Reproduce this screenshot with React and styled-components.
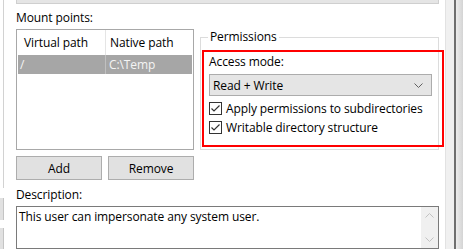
import React from "react";
import styled, { createGlobalStyle } from "styled-components";

const GlobalStyle = createGlobalStyle`
  html, body {
    margin: 0;
    padding: 0;
    background: #ffffff;
  }
  body {
    font-family: "Open Sans", "Noto Sans", "Liberation Sans", sans-serif;
    font-size: 12px;
    letter-spacing: -0.1px;
    color: #000000;
    overflow: hidden;
  }
`

const Window = styled.div`
  display: flex;
  width: 463px;
  height: 249px;
  overflow: hidden;
  background: #ffffff;
`
const LeftEdge = styled.div`
  width: 4px;
  display: flex;
  flex-direction: column;
`
const EdgeLine = styled.div`
  height: 193px;
  border-right: 1px solid #d2d2d2;
`
const EdgeButton = styled.div`
  height: ${p => p.h}px;
  margin-top: ${p => p.gap}px;
  background: #e1e1e1;
  border-right: 1px solid #c4c4c4;
`
const Main = styled.div`
  flex: 1;
  min-width: 0;
  padding: 0 6px 0 12px;
  display: flex;
  flex-direction: column;
`
const RightEdge = styled.div`
  width: 18px;
  display: flex;
`
const Strip = styled.div`
  width: 8px;
  background: #f0f0f0;
  border-left: 1px solid #e2e2e2;
`
const DarkLine = styled.div`
  width: 2px;
  background: #6f6f6f;
`
const Shade = styled.div`
  flex: 1;
  background: linear-gradient(to right, #ececec, #d4d4d4);
`
const TopBox = styled.div`
  height: 5px;
  background: #e5e5e5;
  border: 1px solid #cfcfcf;
  border-top: none;
`
const Columns = styled.div`
  display: grid;
  grid-template-columns: 178px 239px;
  column-gap: 6px;
  align-items: start;
`
const LeftCol = styled.div`
  display: flex;
  flex-direction: column;
`
const Label = styled.div`
  line-height: 16px;
  margin-top: ${p => p.top || 0}px;
  padding-top: ${p => p.drop || 0}px;
  white-space: nowrap;
`
const List = styled.div`
  margin-top: 3px;
  height: 119px;
  border: 1px solid #a8a8a8;
  padding: 0 1px;
  display: flex;
  flex-direction: column;
`
const ListRow = styled.div`
  display: grid;
  grid-template-columns: 87px 1fr;
  height: ${p => p.h}px;
  align-items: center;
  background: ${p => (p.selected ? "#a6a6a6" : "transparent")};
  color: ${p => (p.selected ? "#f4f4f4" : "#000")};
`
const Cell = styled.div`
  height: 100%;
  display: flex;
  align-items: center;
  padding-left: ${p => p.pad}px;
  border-left: ${p => (p.divider ? `1px solid ${p.divider}` : "none")};
  white-space: nowrap;
`
const ButtonRow = styled.div`
  margin-top: 6px;
  display: grid;
  grid-template-columns: 86px 86px;
  column-gap: 6px;
`
const Button = styled.div`
  height: 22px;
  background: #e1e1e1;
  border: 1px solid #adadad;
  display: flex;
  align-items: center;
  justify-content: center;
`
const GroupBox = styled.fieldset`
  margin: 25px 0 0 0;
  padding: 0 0 0 1px;
  height: 121px;
  box-sizing: border-box;
  border: 1px solid #dcdcdc;
  min-width: 0;
`
const Legend = styled.legend`
  margin-left: 6px;
  padding: 0 2px;
  line-height: 16px;
`
const Highlight = styled.div`
  margin: 5px -6px 0 0;
  height: 97px;
  box-sizing: border-box;
  border: 2px solid #ff0000;
  padding: 2px 0 0 5px;
  display: flex;
  flex-direction: column;
`
const Combo = styled.div`
  margin-top: 4px;
  width: 223px;
  height: 22px;
  box-sizing: border-box;
  background: #e5e5e5;
  border: 1px solid #acacac;
  display: flex;
  align-items: center;
  justify-content: space-between;
  padding: 0 8px 0 3px;
`
const CheckRow = styled.div`
  display: flex;
  align-items: center;
  gap: 4px;
  height: 19px;
  margin-top: ${p => p.top || 0}px;
  white-space: nowrap;
`
const CheckBox = styled.div`
  width: 13px;
  height: 13px;
  box-sizing: border-box;
  border: 1px solid #333333;
  background: #ffffff;
  display: flex;
  align-items: center;
  justify-content: center;
`
const DescBox = styled.div`
  margin-top: 3px;
  height: 60px;
  border: 1px solid #7a7a7a;
  display: flex;
`
const DescText = styled.div`
  flex: 1;
  padding: 2px 0 0 2px;
  line-height: 16px;
`
const ScrollBar = styled.div`
  width: 17px;
  background: #f0f0f0;
  display: flex;
  flex-direction: column;
  align-items: center;
  justify-content: space-between;
  padding: 6px 0;
`

const Chevron = ({ up, color = "#606060" }) => (
  <svg width="9" height="5" viewBox="0 0 9 5">
    <path
      d={up ? "M0.5 4.5 L4.5 0.5 L8.5 4.5" : "M0.5 0.5 L4.5 4.5 L8.5 0.5"}
      fill="none"
      stroke={color}
      strokeWidth="1"
    />
  </svg>
)

const Check = () => (
  <svg width="11" height="11" viewBox="0 0 11 11">
    <path d="M1.5 5.5 L4 8 L9.5 2.5" fill="none" stroke="#333" strokeWidth="1.2" />
  </svg>
)

const CheckOption = ({ label, top }) => (
  <CheckRow top={top}>
    <CheckBox>
      <Check />
    </CheckBox>
    {label}
  </CheckRow>
)

export default function App() {
  return (
    <Window>
      <GlobalStyle />
      <LeftEdge>
        <EdgeLine />
        <EdgeButton h={22} gap={10} />
        <EdgeButton h={22} gap={8} />
      </LeftEdge>
      <Main>
        <TopBox />
        <Columns>
          <LeftCol>
            <Label top={5} drop={1}>Mount points:</Label>
            <List>
              <ListRow h={25}>
                <Cell pad={6}>Virtual path</Cell>
                <Cell pad={4} divider="#e5e5e5">Native path</Cell>
              </ListRow>
              <ListRow h={19} selected>
                <Cell pad={2}>/</Cell>
                <Cell pad={3} divider="#c0c0c0">C:\Temp</Cell>
              </ListRow>
            </List>
            <ButtonRow>
              <Button>Add</Button>
              <Button>Remove</Button>
            </ButtonRow>
          </LeftCol>
          <GroupBox>
            <Legend>Permissions</Legend>
            <Highlight>
              <Label>Access mode:</Label>
              <Combo>
                <span>Read + Write</span>
                <Chevron />
              </Combo>
              <CheckOption label="Apply permissions to subdirectories" top={3} />
              <CheckOption label="Writable directory structure" />
            </Highlight>
          </GroupBox>
        </Columns>
        <Label top={6} drop={1}>Description:</Label>
        <DescBox>
          <DescText>This user can impersonate any system user.</DescText>
          <ScrollBar>
            <Chevron up color="#c2c2c2" />
            <Chevron color="#c2c2c2" />
          </ScrollBar>
        </DescBox>
      </Main>
      <RightEdge>
        <Strip />
        <DarkLine />
        <Shade />
      </RightEdge>
    </Window>
  );
}
